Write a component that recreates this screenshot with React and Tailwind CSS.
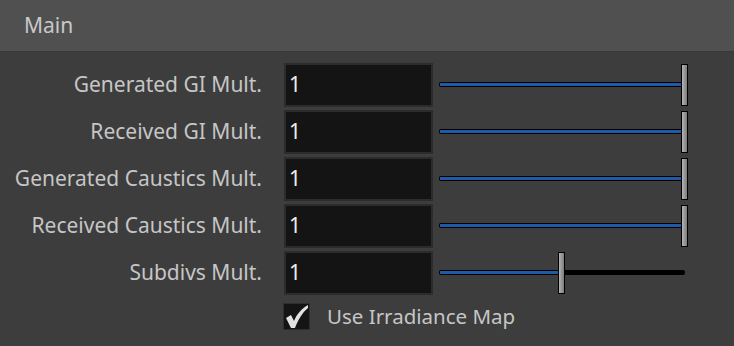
import React from "react";

const rows = [
  { label: "Generated GI Mult.", value: "1", pct: 1 },
  { label: "Received GI Mult.", value: "1", pct: 1 },
  { label: "Generated Caustics Mult.", value: "1", pct: 1 },
  { label: "Received Caustics Mult.", value: "1", pct: 1 },
  { label: "Subdivs Mult.", value: "1", pct: 0.49 },
];

function Slider({ pct }) {
  const x = Math.round(pct * 242);
  return (
    <div className="relative w-[248px] h-[44px]">
      {/* track */}
      <div className="absolute left-0 top-[19px] w-[246px] h-[5px] bg-black rounded-[2px]" />
      <div
        className="absolute left-[1px] top-[20px] h-[3px] bg-[#1e5aa8]"
        style={{ width: x }}
      />
      {/* handle */}
      <div
        className="absolute top-[1px] w-[7px] h-[42px] border border-black bg-gradient-to-r from-[#b4b4b4] to-[#7c7c7c]"
        style={{ left: x }}
      />
    </div>
  );
}

export default function App() {
  return (
    <div
      className="w-[734px] h-[346px] bg-[#3d3d3d] overflow-hidden"
      style={{ fontFamily: '"Noto Sans", "Open Sans", sans-serif' }}
    >
      <div className="h-[52px] bg-[#505050] flex items-center pl-[24px] text-[21px] text-[#c8c8c8] border-b border-[#393939]">
        Main
      </div>

      <div className="flex flex-col gap-[3px] pt-[11px]">
        {rows.map((r, i) => (
          <div key={i} className="flex items-center h-[44px]">
            <div className="w-[262px] text-right text-[21px] text-[#c6c6c6] whitespace-nowrap">
              {r.label}
            </div>
            <div className="ml-[22px] w-[149px] h-[44px] bg-[#141414] border-2 border-[#2c2c2c] flex items-center pl-[3px] text-[21px] text-[#ececec]">
              {r.value}
            </div>
            <div className="ml-[6px]">
              <Slider pct={r.pct} />
            </div>
          </div>
        ))}

        <div className="flex items-center mt-[3px] ml-[283px]">
          <div className="w-[27px] h-[27px] bg-[#141414] border border-[#2e2e2e]">
            <svg width="25" height="25" viewBox="0 0 25 25">
              <path
                d="M2 14 L7 11 L10 17 C13 10 17 5 24 1 L24 4 C18 9 14 16 11 24 L7 24 Z"
                fill="#e2e2e2"
              />
            </svg>
          </div>
          <span className="ml-[17px] text-[20.5px] text-[#c6c6c6]">Use Irradiance Map</span>
        </div>
      </div>
    </div>
  );
}
